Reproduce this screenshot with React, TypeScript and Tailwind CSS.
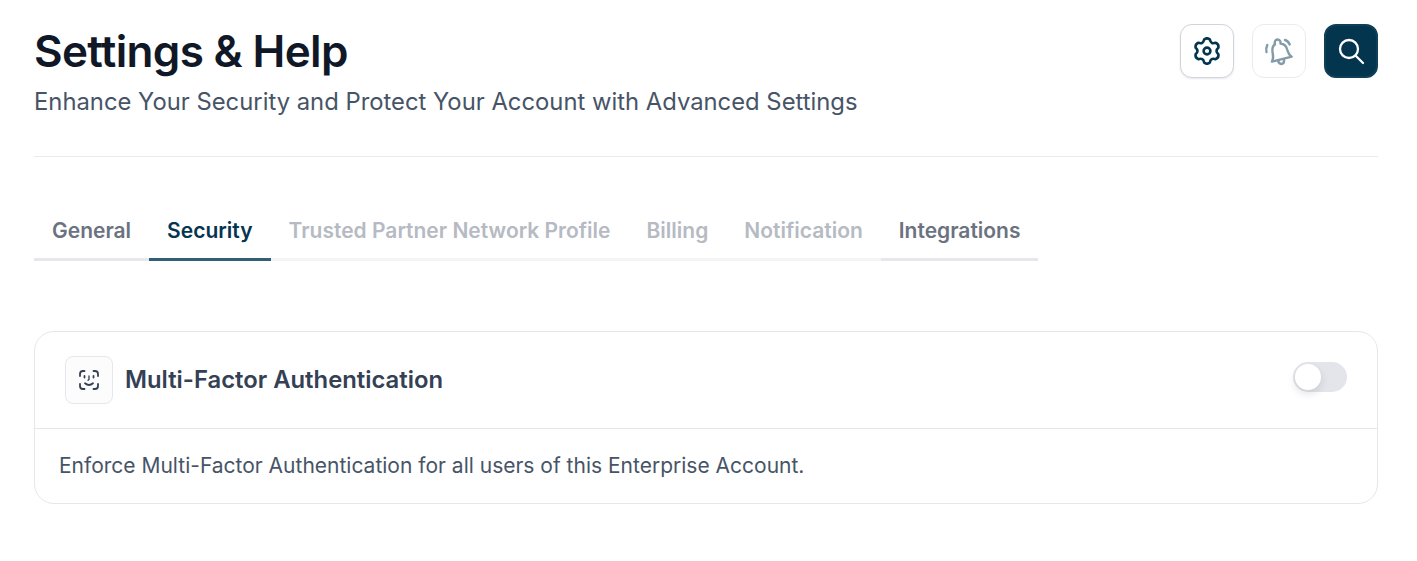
const tabs = [
  { label: 'General', state: 'normal' },
  { label: 'Security', state: 'active' },
  { label: 'Trusted Partner Network Profile', state: 'disabled' },
  { label: 'Billing', state: 'disabled' },
  { label: 'Notification', state: 'disabled' },
  { label: 'Integrations', state: 'normal' },
];

// Six rounded lobes round the centre of the 28 box
function gearPath() {
  const pt = (deg: number, r: number) => {
    const a = (deg * Math.PI) / 180;
    return `${(14 + r * Math.cos(a)).toFixed(2)} ${(14 + r * Math.sin(a)).toFixed(2)}`;
  };
  let d = `M${pt(-104, 11.8)}`;
  for (let k = 0; k < 6; k++) {
    const a = -90 + 60 * k;
    d += ` Q${pt(a, 13.95)} ${pt(a + 14, 11.8)} Q${pt(a + 30, 7.66)} ${pt(a + 46, 11.8)}`;
  }
  return d + 'Z';
}

function GearIcon() {
  return (
    <svg width="28" height="28" viewBox="0 0 28 28" fill="none" stroke="#04354f" strokeWidth="2.6" strokeLinejoin="round">
      <path d={gearPath()} />
      <circle cx="14" cy="14" r="3.400" />
    </svg>
  );
}

function TiltedBell() {
  return (
    <svg width="30" height="30" viewBox="0 0 30 30" fill="none" stroke="#839ba8" strokeWidth="2.400" strokeLinecap="round" strokeLinejoin="round">
      <path d="M8 25.600C10 22 9 19 8.500 16C8 12 9 9.600 11 8.400C10 6 11.500 3.500 13.500 3.500C15.500 3.500 17 5.500 16.500 7.500C20 8 22.500 10.500 23.200 13.500C24 16.500 25 19 27.700 20.700Z" />
      <path d="M14 24.300C14.600 27 16.200 28.300 18 27.900C19.600 27.500 20.300 26 20 23.200" />
      <path d="M3.300 9C2.200 11.200 1.900 13.500 2.500 16" />
      <path d="M21 4C23 4.600 24.600 6 25.700 8.500" />
    </svg>
  );
}

function SearchIcon() {
  return (
    <svg width="28" height="28" viewBox="0 0 28 28" fill="none" stroke="#ffffff" strokeWidth="2.300" strokeLinecap="round">
      <circle cx="12" cy="12" r="9" />
      <path d="M18.700 18.700L26 26" />
    </svg>
  );
}

function FaceIcon() {
  return (
    <svg width="24" height="24" viewBox="0 0 24 24" fill="none" stroke="#344054" strokeWidth="1.800" strokeLinecap="round" strokeLinejoin="round">
      <path d="M3 8V6a3 3 0 0 1 3-3h1.500" />
      <path d="M16.500 3H18a3 3 0 0 1 3 3v2" />
      <path d="M21 16v2a3 3 0 0 1-3 3h-1.500" />
      <path d="M7.500 21H6a3 3 0 0 1-3-3v-2" />
      <path d="M7.500 8v1.500" />
      <path d="M16.500 8v1.500" />
      <path d="M12 8v3.500l-1 .8" strokeWidth="1.300" />
      <path d="M8 15.300c2.400 2 5.600 2 8 0" />
    </svg>
  );
}

function IconButton({ children, className }: { children: React.ReactNode; className: string }) {
  return (
    <button type="button" className={`flex h-[54px] w-[54px] items-center justify-center rounded-xl ${className}`}>
      {children}
    </button>
  );
}

export default function App() {
  return (
    <div className="min-h-[561px] bg-white pl-[34px] pr-[39px] font-['Inter',sans-serif]">
      <header className="flex justify-between border-b border-[#e9eaeb] pt-6 pb-[38px]">
        <div>
          <h1 className="text-[44px] leading-[54px] font-semibold tracking-[-0.66px] text-[#101828]">Settings &amp; Help</h1>
          <p className="mt-2 text-[23.82px] leading-[32px] text-[#475467]">
            Enhance Your Security and Protect Your Account with Advanced Settings
          </p>
        </div>
        <div className="flex items-start gap-[18px]">
          <IconButton className="border border-[#d0d5dd] bg-white shadow-[0_1px_2px_rgba(16,24,40,0.1)]">
            <GearIcon />
          </IconButton>
          <IconButton className="border border-[#eaecf0] bg-white">
            <TiltedBell />
          </IconButton>
          <IconButton className="border-2 border-[#104058] bg-[#04354f]">
            <SearchIcon />
          </IconButton>
        </div>
      </header>

      <nav className="mt-[58px] flex">
        {tabs.map((t) => (
          <div
            key={t.label}
            className={`border-b-[3px] px-[18px] pt-px pb-3 text-[21px] leading-[30px] font-semibold ${
              t.state === 'active'
                ? 'border-[#316075] text-[#04354f]'
                : t.state === 'disabled'
                  ? 'border-[#f3f4f6] text-[#b6bac3]'
                  : 'border-[#e5e7eb] text-[#6b7280]'
            }`}
          >
            {t.label}
          </div>
        ))}
      </nav>

      <section className="mt-[70px] rounded-[20px] border border-[#e5e7eb]">
        <div className="flex items-center justify-between border-b border-[#e5e7eb] py-6 px-[30px]">
          <div className="flex items-center gap-3">
            <div className="flex h-12 w-12 items-center justify-center rounded-lg border border-[#e5e7eb] bg-[#fcfcfd]">
              <FaceIcon />
            </div>
            <h2 className="text-[23.84px] leading-8 font-semibold text-[#344054]">Multi-Factor Authentication</h2>
          </div>
          <div className="mb-[6px] flex h-[30px] w-[54px] items-center rounded-full bg-[#e4e5ea] px-[2px]">
            <span className="h-[26px] w-[26px] rounded-full bg-white shadow-[0_4px_8px_rgba(16,24,40,0.12)]" />
          </div>
        </div>
        <p className="px-6 pt-[23px] pb-[23px] text-[21px] leading-[28px] text-[#475467]">
          Enforce Multi-Factor Authentication for all users of this Enterprise Account.
        </p>
      </section>
    </div>
  );
}
